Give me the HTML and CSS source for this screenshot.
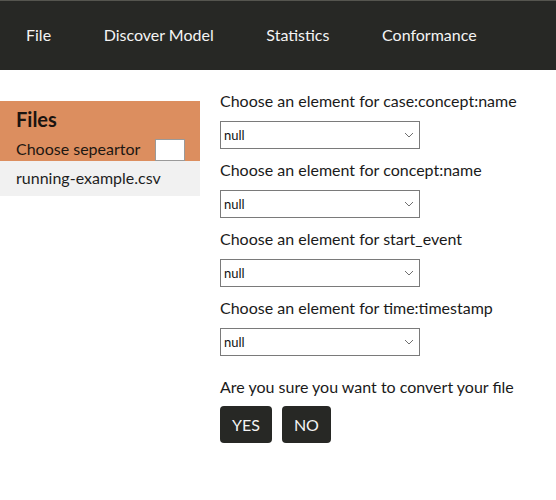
FILE: index.html
```html
<!DOCTYPE html>
<html>
<head>
<meta charset="utf-8">
<link rel="stylesheet" href="styles.css">
</head>
<body>
<nav class="topbar">
  <a class="nav-item">File</a>
  <a class="nav-item">Discover Model</a>
  <a class="nav-item">Statistics</a>
  <a class="nav-item">Conformance</a>
</nav>
<div class="layout">
  <aside class="sidebar">
    <div class="files-head">
      <div class="files-title">Files</div>
      <div class="sep-row">
        <span class="sep-label">Choose sepeartor</span>
        <input class="sep-input" type="text">
      </div>
    </div>
    <div class="file-row">running-example.csv</div>
  </aside>
  <main class="content">
    <div class="field">
      <div class="label">Choose an element for case:concept:name</div>
      <select class="choice"><option>null</option></select>
    </div>
    <div class="field">
      <div class="label">Choose an element for concept:name</div>
      <select class="choice"><option>null</option></select>
    </div>
    <div class="field">
      <div class="label">Choose an element for start_event</div>
      <select class="choice"><option>null</option></select>
    </div>
    <div class="field">
      <div class="label">Choose an element for time:timestamp</div>
      <select class="choice"><option>null</option></select>
    </div>
    <div class="confirm">
      <div class="label">Are you sure you want to convert your file</div>
      <div class="buttons">
        <button class="btn">YES</button>
        <button class="btn">NO</button>
      </div>
    </div>
  </main>
</div>
</body>
</html>
```

FILE: styles.css
```css
html, body {
  margin: 0;
  padding: 0;
  background: #ffffff;
  font-family: Lato, "Open Sans", sans-serif;
  color: #1b1b1b;
}
.topbar {
  display: flex;
  align-items: center;
  box-sizing: border-box;
  height: 70px;
  padding-bottom: 2px;
  border-top: 1px solid #55554f;
  background: #272825;
}
.nav-item {
  color: #f4f4f4;
  font-size: 16px;
  padding: 0 26px;
  line-height: 20px;
}
.nav-item + .nav-item {
  margin-left: 0.6px;
}
.layout {
  display: flex;
}
.sidebar {
  width: 200px;
  flex: none;
  margin-top: 31px;
}
.files-head {
  background: #dc8e5f;
  padding: 6px 15px 0 16px;
}
.files-title {
  font-size: 20px;
  font-weight: 700;
  line-height: 24px;
  margin-bottom: 8px;
  color: #1a1410;
}
.sep-row {
  display: flex;
  justify-content: space-between;
  align-items: center;
  height: 22px;
  font-size: 16px;
  color: #1c1712;
}
.sep-label {
  margin-bottom: 4px;
}
.sep-input {
  box-sizing: border-box;
  width: 30px;
  height: 22px;
  margin: 0;
  border: 1px solid #9a9a9a;
  background: #ffffff;
  padding: 0;
}
.file-row {
  background: #f1f1f1;
  height: 35px;
  padding: 0 16px;
  font-size: 16px;
  line-height: 34px;
  color: #1e1e1e;
}
.content {
  padding: 21px 0 0 20px;
}
.field {
  margin-bottom: 11px;
}
.label {
  font-size: 16px;
  line-height: 20px;
  color: #1a1a1a;
}
.choice {
  display: block;
  box-sizing: border-box;
  margin-top: 10px;
  width: 200px;
  height: 28px;
  border: 1px solid #7a7a7a;
  border-radius: 0;
  background: #ffffff url("data:image/svg+xml;utf8,<svg xmlns='http://www.w3.org/2000/svg' width='10' height='6' viewBox='0 0 10 6'><path d='M1 1 L5 5 L9 1' fill='none' stroke='%23707070' stroke-width='1'/></svg>") no-repeat right 5px center;
  appearance: none;
  -webkit-appearance: none;
  padding: 0 0 0 3px;
  font-family: Lato, "Open Sans", sans-serif;
  font-size: 13px;
  color: #111111;
}
.confirm {
  padding-top: 10px;
}
.buttons {
  display: flex;
  gap: 10px;
  margin-top: 9px;
}
.btn {
  background: #272825;
  color: #f4f4f4;
  border: none;
  border-radius: 4px;
  height: 37px;
  padding: 0 12px;
  font-family: Lato, "Open Sans", sans-serif;
  font-size: 16px;
}
```
